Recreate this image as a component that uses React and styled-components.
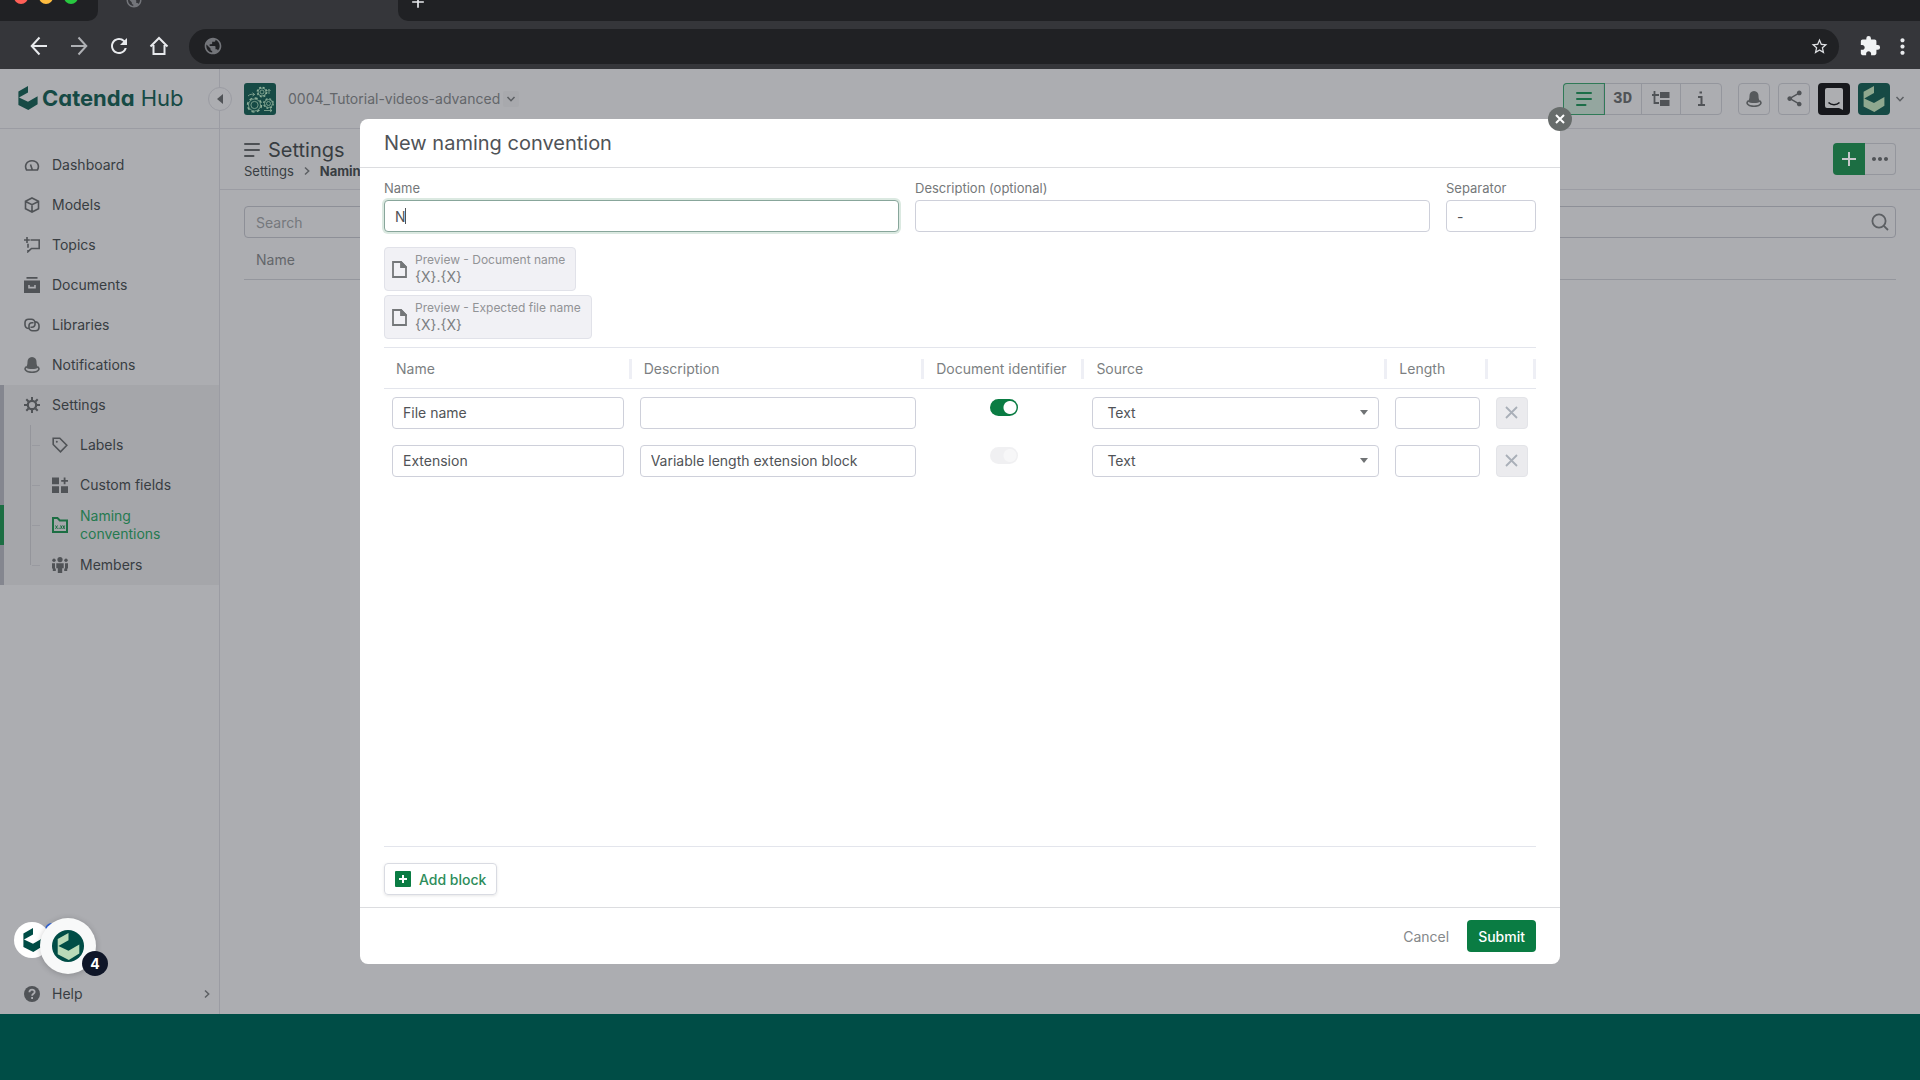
import { useState } from 'react'
import styled, { createGlobalStyle } from 'styled-components'
import { MdPublic, MdRefresh, MdStarBorder, MdExtension, MdMoreVert, MdAdd, MdShare, MdMoreHoriz } from 'react-icons/md'

const App = () => (
  <Screen>
    <GlobalStyle />
    <BrowserChrome />
    <Page>
      <Sidebar />
      <Main />
      <Overlay>
        <NamingDialog />
      </Overlay>
      <ChatBubbles />
    </Page>
    <BottomBand />
  </Screen>
)

export default App;

const BrowserChrome = () => (
  <header>
    <TabStrip>
      <WindowControls>
        <Light $color="#ff5f57" />
        <Light $color="#febc40" />
        <Light $color="#28c840" />
      </WindowControls>
      <Tab><MdPublic size={18} color="#73757a" /></Tab>
      <TabRest><MdAdd size={20} color="#e8eaed" /></TabRest>
    </TabStrip>
    <Toolbar>
      <ChromeButton aria-label="Back">
        <svg width="18" height="20" viewBox="0 0 18 20" fill="none" stroke="#e8eaed" strokeWidth="2"><path d="M17 10H2M9.500 1.500L1.700 10l7.800 8.500" /></svg>
      </ChromeButton>
      <ChromeButton aria-label="Forward">
        <svg width="18" height="20" viewBox="0 0 18 20" fill="none" stroke="#aeb0b4" strokeWidth="2"><path d="M1 10h15M8.500 1.500l7.800 8.500-7.800 8.500" /></svg>
      </ChromeButton>
      <ChromeButton aria-label="Reload"><MdRefresh size={24} color="#e8eaed" /></ChromeButton>
      <ChromeButton aria-label="Home">
        <svg width="20" height="20" viewBox="0 0 20 20" fill="none" stroke="#e8eaed" strokeWidth="2"><path d="M4.500 9v9h11V9M1.500 10.500L10 2l8.500 8.500" /></svg>
      </ChromeButton>
      <AddressBar>
        <MdPublic size={20} color="#73757a" />
        <AddressInput aria-label="Address" />
        <MdStarBorder size={19} color="#dddfe2" />
      </AddressBar>
      <ExtensionButton aria-label="Extensions"><MdExtension size={22} color="#f1f3f4" /></ExtensionButton>
      <ExtensionButton aria-label="More"><MdMoreVert size={25} color="#e8eaed" /></ExtensionButton>
    </Toolbar>
  </header>
)

/* icons */

const Hexagon = ({ size = 24, color = '#164a45' }) => (
  <svg width={size} height={size} viewBox="0 0 24 24" fill={color}>
    <path d="M12 0v6.400L3 11.500l9 4.200 9.600-5.500v8L12.300 24l-9.900-5.100V5.400z" />
  </svg>
)

const BellIcon = () => (
  <svg width="16" height="16" viewBox="0 0 16 16" fill="#56595c">
    <path d="M8 0C5 0 3.500 2.200 3.500 4.800c0 2.500-.4 4-1.700 5.600C4 12.600 12 12.600 14.200 10.400c-1.300-1.600-1.700-3.100-1.700-5.600C12.500 2.200 11 0 8 0z" />
    <path d="M2.500 9.500C-.5 12 1.500 15.300 8 15.300S16.500 12 13.500 9.500" fill="none" stroke="#56595c" strokeWidth="1.600" />
  </svg>
)

const icons = {
  Dashboard: <path d="M2.600 13C.2 9 2.300 3.700 8 3.700S15.800 9 13.400 13zM8.200 12.500L6.500 7.500" fill="none" />,
  Models: <path d="M8 1l6.500 3.300v7.400L8 15l-6.500-3.300V4.300zM1.500 4.500L8 7.700l6.500-3.200M8 7.700V15" fill="none" />,
  Topics: <path d="M6.500 3h8.700v8.500H7.500L4 14.700V13M4 6.700v4M0 3h5.800M3 0v6" fill="none" />,
  Documents: <path d="M2.500 0h11v1.800h-11zM0 3.600h16V16H0zM4.200 8v3.400h7.600V8h-1.600v1.800H5.800V8z" fillRule="evenodd" stroke="none" />,
  Libraries: <path d="M4.500 11.500A4.300 4.300 0 0 1 1 7V5.500a3.500 3.500 0 0 1 3.500-3.300h3A3.500 3.500 0 0 1 11 5.700v1.500a3 3 0 0 1-3 3H6.500M11.500 4.700A4.300 4.300 0 0 1 15 9v1.500a3.500 3.500 0 0 1-3.500 3.300h-3A3.500 3.500 0 0 1 5 10.300V8.800a3 3 0 0 1 3-3h1.500" fill="none" />,
  Settings: (
    <>
      <circle cx="8" cy="8" r="4.200" fill="none" strokeWidth="2.200" />
      <path d="M8 0v3M8 13v3M0 8h3M13 8h3M2.300 2.300l2.200 2.200M11.500 11.500l2.200 2.200M2.300 13.700l2.200-2.200M11.500 4.500l2.200-2.200" strokeWidth="2" />
    </>
  ),
  Labels: (
    <>
      <path d="M1.200 1.200h6.600l7 7-6.300 6.600-7.300-7.300z" fill="none" />
      <circle cx="4.800" cy="4.800" r="1" stroke="none" />
    </>
  ),
  'Custom fields': <path d="M0 .5h7v6.700H0zM0 9.200h7V16H0zM9 9.200h7V16H9zM11.700.5h1.800v2.400H16v1.800h-2.500v2.500h-1.800V4.700H9.200V2.900h2.500z" stroke="none" />,
  'Naming conventions': (
    <>
      <path d="M1 15V1h4.500l2.300 2.400H15V15z" fill="none" strokeWidth="2" />
      <path d="M3.500 8.500l2 3.300M5.500 8.500l-2 3.300M6.500 11.300h1.200M8.500 8.500l1.700 3.300M10.200 8.500l-1.700 3.300M11 8.500l1.700 3.300M12.700 8.500L11 11.800" strokeWidth="1" />
    </>
  ),
  Members: (
    <g stroke="none">
      <circle cx="8" cy="2.600" r="2.600" />
      <circle cx="2" cy="3.200" r="1.700" />
      <circle cx="14" cy="3.200" r="1.700" />
      <path d="M4.300 6.300h7.400v5h-1.500V16H5.800v-4.700H4.300zM0 6.300h3v5.200h.8V14H.8v-2.500H0zM16 6.300h-3v5.200h-.8V14h3v-2.500h.8z" />
    </g>
  ),
}

const NavIcon = ({ name }) => name === 'Notifications' ? <BellIcon /> : (
  <svg width="16" height="16" viewBox="0 0 16 16" fill="currentColor" stroke="currentColor" strokeWidth="1.600">{icons[name]}</svg>
)

const MenuIcon = ({ color = '#4d5054' }) => (
  <svg width="16" height="16" viewBox="0 0 16 16" stroke={color} strokeWidth="2" strokeLinecap="round"><path d="M1 2h14M1 8h14M1 14h8.500" /></svg>
)

const Chevron = ({ rotate = 0 }) => (
  <svg width="10" height="10" viewBox="0 0 10 10" fill="none" stroke="#5c5f63" strokeWidth="1.500"><path d="M1.500 3L5 6.700 8.500 3" transform={`rotate(${rotate} 5 5)`} /></svg>
)

const Gears = () => (
  <ProjectIcon width="32" height="32" viewBox="0 0 32 32" fill="none" stroke="#8fb09a" strokeWidth=".8">
    <circle cx="10.500" cy="22" r="7" strokeWidth="1.400" strokeDasharray="3 2.500" />
    <circle cx="10.500" cy="22" r="6" />
    <circle cx="10.500" cy="22" r="3.600" />
    <circle cx="18" cy="9" r="4.800" strokeWidth="1.200" strokeDasharray="2 1.800" />
    <circle cx="18" cy="9" r="4" />
    <circle cx="18" cy="9" r="2" />
    <circle cx="24.500" cy="20.500" r="4.800" strokeWidth="1.200" strokeDasharray="2 1.800" />
    <circle cx="24.500" cy="20.500" r="4" />
    <circle cx="24.500" cy="20.500" r="2" />
    <path d="M4 13c2-2 4-2 6.500-1.500M8.500 9.700l2.200 1.800-2.200 1.500M25 11V6.500M23.500 8L25 6.300 26.500 8M20 27.500h8M26 26l2 1.500-2 1.500" />
  </ProjectIcon>
)

/* page behind the dialog */

const mainItems = ['Dashboard', 'Models', 'Topics', 'Documents', 'Libraries', 'Notifications']
const settingsItems = ['Labels', 'Custom fields', 'Naming conventions', 'Members']

const Sidebar = () => (
  <SidebarContainer>
    <Brand href="#">
      <Hexagon />
      <BrandName><b>Catenda</b> Hub</BrandName>
    </Brand>
    <CollapseButton aria-label="Collapse sidebar">
      <svg width="8" height="10" viewBox="0 0 8 10" fill="#505357"><path d="M7 0v10L1 5z" /></svg>
    </CollapseButton>
    <Nav>
      {mainItems.map(item => <NavItem key={item} href="#"><NavIcon name={item} />{item}</NavItem>)}
      <SettingsGroup>
        <NavItem href="#"><NavIcon name="Settings" />Settings</NavItem>
        <SubList>
          {settingsItems.map(item => (
            <SubItem key={item} href="#" $active={item === 'Naming conventions'}>
              <NavIcon name={item} /><span>{item}</span>
            </SubItem>
          ))}
        </SubList>
      </SettingsGroup>
    </Nav>
    <HelpItem href="#">
      <svg width="16" height="16" viewBox="0 0 16 16"><circle cx="8" cy="8" r="8" fill="#505357" /><path d="M5.400 6.200c0-3.400 5.300-3.300 5.300-.2C10.700 7.700 8.100 7.900 8.100 9.700M8.100 11v1.900" fill="none" stroke="#acadb1" strokeWidth="1.800" /></svg>
      <span>Help</span>
      <Chevron rotate={-90} />
    </HelpItem>
  </SidebarContainer>
)

const Main = () => (
  <MainContainer>
    <TopBar>
      <Gears />
      <ProjectName>0004_Tutorial-videos-advanced</ProjectName>
      <ProjectToggle aria-label="Switch project"><Chevron /></ProjectToggle>
      <ViewButtons>
        <ViewButton $width={40} $active aria-label="List"><MenuIcon color="#1c6e48" /></ViewButton>
        <ViewButton $width={38}>3D</ViewButton>
        <ViewButton $width={39} aria-label="Tree">
          <svg width="18" height="16" viewBox="0 0 18 16" fill="#505357"><path d="M8 1h9.500v6H8zM8 9h9.500v6H8z" /><path d="M0 4h7M2.500 0v12H7" fill="none" stroke="#505357" strokeWidth="1.800" /></svg>
        </ViewButton>
        <ViewButton $width={40} aria-label="Info">
          <svg width="8" height="16" viewBox="0 0 8 16" fill="none" stroke="#505357" strokeWidth="2"><path d="M1 6h3.500v8M1 14h7M2.500 1.500h2.500" /></svg>
        </ViewButton>
      </ViewButtons>
      <IconButton aria-label="Notifications"><BellIcon /></IconButton>
      <IconButton aria-label="Share"><MdShare size={19} /></IconButton>
      <MessengerButton aria-label="Messages">
        <svg width="20" height="22" viewBox="0 0 20 22" fill="#adaeb1"><path d="M3 0h14a2 2 0 0 1 2 2v20l-4-2H3a2 2 0 0 1-2-2V2a2 2 0 0 1 2-2z" /><path d="M4.500 14.500c3 3 8 3 11 0" fill="none" stroke="#17181c" strokeWidth="1.500" /></svg>
      </MessengerButton>
      <Avatar aria-label="Account"><Hexagon size={26} color="#8fa88f" /></Avatar>
      <Chevron />
    </TopBar>
    <TitleBar>
      <div>
        <PageTitle><MenuIcon />Settings</PageTitle>
        <Breadcrumb><a href="#">Settings</a><Chevron rotate={-90} /><b>Naming conventions</b></Breadcrumb>
      </div>
      <SplitButton>
        <AddButton aria-label="Add"><MdAdd size={24} /></AddButton>
        <MoreButton aria-label="More actions"><MdMoreHoriz size={24} /></MoreButton>
      </SplitButton>
    </TitleBar>
    <ListArea>
      <SearchBox>
        <SearchInput type="search" placeholder="Search" aria-label="Search" />
        <svg width="18" height="18" viewBox="0 0 18 18" fill="none" stroke="#5c5f63" strokeWidth="1.800"><circle cx="8" cy="8" r="6.600" /><path d="M12.800 12.800L17 17" /></svg>
      </SearchBox>
      <ListHeader>Name</ListHeader>
    </ListArea>
  </MainContainer>
)

const ChatBubbles = () => (
  <>
    <NoticeDot />
    <SmallBubble aria-label="Catenda messages"><Hexagon size={24} color="#004d46" /></SmallBubble>
    <LargeBubble aria-label="Open chat"><span><Hexagon size={27} color="#b9dbb8" /></span></LargeBubble>
    <UnreadBadge>4</UnreadBadge>
  </>
)

/* dialog */

const blocks = [
  { name: 'File name', description: '', identifier: true },
  { name: 'Extension', description: 'Variable length extension block', identifier: false },
]

const FileIcon = () => (
  <svg width="15" height="17" viewBox="0 0 15 17" fill="none" stroke="#747779" strokeWidth="1.800"><path d="M1 1h8l5 5v10H1z" /><path d="M9 1v5h5z" fill="#747779" /></svg>
)

const Preview = ({ title }) => (
  <PreviewCard>
    <FileIcon />
    <div>
      <PreviewTitle>{title}</PreviewTitle>
      <PreviewValue>{'{X}.{X}'}</PreviewValue>
    </div>
  </PreviewCard>
)

const NamingDialog = () => {
  const [name, setName] = useState('N')

  return (
    <Dialog role="dialog" aria-labelledby="dialog-title">
      <CloseButton aria-label="Close">
        <svg width="10" height="10" viewBox="0 0 10 10" stroke="#fff" strokeWidth="2"><path d="M1 1l8 8M9 1L1 9" /></svg>
      </CloseButton>
      <DialogTitle id="dialog-title">New naming convention</DialogTitle>
      <DialogBody>
        <Fields>
          <Field>Name<FocusedInput $caret={name === 'N'} value={name} onChange={e => setName(e.target.value)} /></Field>
          <Field>Description (optional)<Input /></Field>
          <Field>Separator<Input defaultValue="-" /></Field>
        </Fields>
        <Previews>
          <Preview title="Preview - Document name" />
          <Preview title="Preview - Expected file name" />
        </Previews>
        <BlockArea>
          <BlockTable>
            <colgroup>
              <Col $width="21.5%" /><Col $width="25.4%" /><Col $width="13.9%" /><Col $width="26.3%" /><Col $width="8.7%" /><Col $width="4.2%" />
            </colgroup>
            <thead>
              <tr>
                {['Name', 'Description', 'Document identifier', 'Source', 'Length', ''].map(head => (
                  <HeadCell key={head}><HeadLabel>{head}</HeadLabel></HeadCell>
                ))}
              </tr>
            </thead>
            <tbody>
              {blocks.map(block => (
                <tr key={block.name}>
                  <Cell><Input aria-label="Block name" defaultValue={block.name} /></Cell>
                  <Cell><Input aria-label="Block description" defaultValue={block.description} /></Cell>
                  <ToggleCell><Toggle type="checkbox" aria-label="Document identifier" defaultChecked={block.identifier} disabled={!block.identifier} /></ToggleCell>
                  <Cell><Select aria-label="Source"><option>Text</option></Select></Cell>
                  <Cell><Input aria-label="Length" /></Cell>
                  <Cell>
                    <RemoveButton aria-label="Remove block" disabled>
                      <svg width="13" height="13" viewBox="0 0 13 13" stroke="#a9afb8" strokeWidth="1.800"><path d="M1 1l11 11M12 1L1 12" /></svg>
                    </RemoveButton>
                  </Cell>
                </tr>
              ))}
            </tbody>
          </BlockTable>
        </BlockArea>
        <AddBlockButton>
          <svg width="16" height="16" viewBox="0 0 16 16"><rect width="16" height="16" rx="1" fill="#0a7c43" /><path d="M8 4v8M4 8h8" stroke="#fff" strokeWidth="2" /></svg>
          Add block
        </AddBlockButton>
      </DialogBody>
      <DialogFooter>
        <CancelButton>Cancel</CancelButton>
        <SubmitButton>Submit</SubmitButton>
      </DialogFooter>
    </Dialog>
  )
}

const GlobalStyle = createGlobalStyle`
  * {
    box-sizing: border-box;
  }

  body {
    margin: 0;
    font-family: Inter, "Liberation Sans", sans-serif;
    font-size: 14px;
    color: #383d42;
  }

  button, input, select {
    font: inherit;
    color: inherit;
  }

  button {
    display: flex;
    align-items: center;
    justify-content: center;
    padding: 0;
    border: 0;
    background: none;
  }

  a {
    color: inherit;
    text-decoration: none;
  }

  svg {
    flex: none;
  }
`

const Screen = styled.div`
  display: flex;
  flex-direction: column;
  height: 100vh;
`

const TabStrip = styled.div`
  display: flex;
  align-items: flex-end;
  height: 21px;
  overflow: hidden;
  background-color: #35363a;
`

const WindowControls = styled.div`
  display: flex;
  align-items: center;
  gap: 11px;
  width: 98px;
  height: 42px;
  padding: 0 0 6px 14px;
  border-bottom-right-radius: 10px;
  background-color: #202124;
`

const Light = styled.i`
  width: 14px;
  height: 14px;
  border-radius: 50%;
  background-color: ${props => props.$color};
`

const Tab = styled.div`
  display: flex;
  align-items: center;
  width: 300px;
  height: 42px;
  padding-left: 27px;
`

const TabRest = styled.div`
  display: flex;
  flex: 1;
  align-items: center;
  height: 42px;
  padding: 4px 0 0 10px;
  border-bottom-left-radius: 10px;
  background-color: #202124;
`

const Toolbar = styled.div`
  display: flex;
  align-items: center;
  height: 48px;
  padding: 2px 2px 0 19px;
  background-color: #35363a;
`

const ChromeButton = styled.button`
  width: 40px;
  height: 40px;
`

const AddressBar = styled.div`
  display: flex;
  flex: 1;
  align-items: center;
  height: 35px;
  margin: 0 15px 0 10px;
  padding: 0 10px 0 14px;
  border-radius: 18px;
  background-color: #202124;
`

const AddressInput = styled.input`
  flex: 1;
  border: 0;
  background: none;
  color: #e8eaed;
`

const ExtensionButton = styled.button`
  width: 32px;
`

const Page = styled.div`
  position: relative;
  display: flex;
  flex: 1;
  min-height: 0;
  background-color: #acadb1;
`

const BottomBand = styled.footer`
  height: 66px;
  background-color: #004d46;
`

const SidebarContainer = styled.aside`
  position: relative;
  display: flex;
  flex-direction: column;
  width: 220px;
  border-right: 1px solid #9b9ca3;
`

const Brand = styled.a`
  display: flex;
  align-items: center;
  gap: 2px;
  height: 60px;
  padding: 0 0 2px 16px;
  border-bottom: 1px solid #9b9ca3;
  color: #164a45;
`

const BrandName = styled.span`
  font-size: 22px;
  font-feature-settings: "cv11";
`

const CollapseButton = styled.button`
  position: absolute;
  top: 18px;
  right: -13px;
  width: 24px;
  height: 24px;
  border: 1px solid #9b9ca3;
  border-radius: 50%;
  background-color: #acadb1;
`

const Nav = styled.nav`
  flex: 1;
  padding-top: 16px;
`

const NavItem = styled.a`
  display: flex;
  align-items: center;
  gap: 12px;
  height: 40px;
  padding-left: 24px;
  line-height: 18px;

  svg {
    color: #505357;
  }
`

const HelpItem = styled(NavItem)`
  padding-right: 7px;

  span {
    flex: 1;
  }
`

const SettingsGroup = styled.div`
  background: linear-gradient(#84868f, #84868f) 0 0 / 4px 100% no-repeat #a5a6aa;
`

const SubList = styled.div`
  background: linear-gradient(#94959b, #94959b) 30px 0 / 1px 140px no-repeat;
`

const SubItem = styled(NavItem)`
  padding-left: 52px;
  color: ${props => props.$active ? '#257a50' : 'inherit'};
  background:
    linear-gradient(#999aa0, #999aa0) 32px 50% / 8px 1px no-repeat,
    linear-gradient(#1c6e43, #1c6e43) 0 0 / ${props => props.$active ? 4 : 0}px 100% no-repeat;

  svg {
    color: ${props => props.$active ? '#1c6e43' : '#505357'};
  }

  span {
    width: 100px;
  }
`

const MainContainer = styled.main`
  flex: 1;
  min-width: 0;
`

const TopBar = styled.div`
  display: flex;
  align-items: center;
  height: 60px;
  padding: 0 15px 0 24px;
  border-bottom: 1px solid #9b9ca3;
`

const ProjectIcon = styled.svg`
  border-radius: 3px;
  background-color: #164a45;
`

const ProjectName = styled.span`
  margin-left: 12px;
  line-height: 18px;
  color: #63666a;
`

const ProjectToggle = styled.button`
  width: 16px;
  height: 16px;
  margin-left: 3px;
  border-radius: 2px;
  background-color: #a8a9ad;
`

const ViewButtons = styled.div`
  display: flex;
  height: 32px;
  margin: 0 16px 0 auto;
  border: 1px solid #94969d;
  border-radius: 4px;
`

const ViewButton = styled.button`
  width: ${props => props.$width}px;
  border-right: 1px solid #94969d;
  font-family: "Liberation Mono", monospace;
  font-size: 16px;
  font-weight: bold;
  line-height: 20px;
  color: #505357;
  background-color: ${props => props.$active ? '#94a69f' : 'transparent'};
  box-shadow: ${props => props.$active ? '0 0 0 1px #2f7a57' : 'none'};

  &:first-child {
    border-radius: 3px 0 0 3px;
  }

  &:last-child {
    border-right: 0;
  }
`

const IconButton = styled.button`
  width: 32px;
  height: 32px;
  margin-right: 8px;
  border: 1px solid #94969d;
  border-radius: 4px;
  color: #505357;
`

const MessengerButton = styled(IconButton)`
  border: 0;
  background-color: #17181c;
`

const Avatar = styled(IconButton)`
  margin-right: 5px;
  border: 0;
  background-color: #164a45;
`

const TitleBar = styled.div`
  display: flex;
  justify-content: space-between;
  align-items: center;
  height: 61px;
  padding: 0 24px;
  border-bottom: 1px solid #9b9ca3;
`

const PageTitle = styled.h1`
  display: flex;
  align-items: center;
  gap: 8px;
  margin: 0;
  font-size: 20px;
  font-weight: 400;
  line-height: 24px;
`

const Breadcrumb = styled.div`
  display: flex;
  align-items: center;
  gap: 8px;
  font-size: 13px;
  line-height: 18px;
`

const SplitButton = styled.div`
  display: flex;
  height: 32px;
`

const AddButton = styled.button`
  width: 32px;
  border-radius: 4px 0 0 4px;
  color: #c6c7ca;
  background-color: #1c6e43;
`

const MoreButton = styled.button`
  width: 31px;
  border: 1px solid #94969d;
  border-left: 0;
  border-radius: 0 4px 4px 0;
  color: #505357;
`

const ListArea = styled.div`
  padding: 16px 24px;
`

const SearchBox = styled.div`
  display: flex;
  align-items: center;
  height: 32px;
  padding: 0 6px 0 11px;
  border: 1px solid #8d8f97;
  border-radius: 4px;
`

const SearchInput = styled.input`
  flex: 1;
  padding: 0;
  border: 0;
  background: none;

  &::placeholder {
    color: #75787d;
  }
`

const ListHeader = styled.div`
  height: 42px;
  padding-left: 12px;
  border-bottom: 1px solid #94969d;
  line-height: 44px;
  color: #63666a;
`

const Overlay = styled.div`
  position: absolute;
  inset: 0;
  display: flex;
  justify-content: center;
  padding: 50px;
`

const Dialog = styled.section`
  position: relative;
  display: flex;
  flex-direction: column;
  width: 1200px;
  border-radius: 8px;
  background-color: #fff;
  color: #505357;
`

const CloseButton = styled.button`
  position: absolute;
  top: -12px;
  right: -12px;
  width: 24px;
  height: 24px;
  border-radius: 50%;
  background-color: #676c6b;
`

const DialogTitle = styled.h2`
  height: 49px;
  margin: 0;
  padding: 0 24px;
  border-bottom: 1px solid #dcdde0;
  font-size: 20px;
  font-weight: 400;
  line-height: 48px;
`

const DialogBody = styled.div`
  display: flex;
  flex: 1;
  flex-direction: column;
  align-items: flex-start;
  padding: 12px 24px;
`

const Fields = styled.div`
  display: grid;
  grid-template-columns: 1fr 1fr 90px;
  gap: 16px;
  width: 100%;
`

const Field = styled.label`
  display: grid;
  gap: 4px;
  font-size: 13px;
  line-height: 16px;
  color: #75787a;
`

const Input = styled.input`
  display: block;
  width: 100%;
  height: 32px;
  padding: 0 10px;
  border: 1px solid #ced0da;
  border-radius: 4px;
  outline: 0;
  background-color: #fff;
  font-size: 14px;
  color: #505357;
`

const FocusedInput = styled(Input)`
  border-color: #88a69b;
  box-shadow: 0 0 0 2px #dbe9e1;
  background: linear-gradient(#505357, #505357) 20px 7px / ${props => props.$caret ? 1 : 0}px 16px no-repeat #fff;
`

const Previews = styled.div`
  display: flex;
  flex-direction: column;
  align-items: flex-start;
  gap: 4px;
  margin: 15px 0 8px;
`

const PreviewCard = styled.div`
  display: flex;
  align-items: center;
  gap: 8px;
  height: 44px;
  padding: 0 10px 0 7px;
  border: 1px solid #e1e2e9;
  border-radius: 4px;
  background-color: #f1f1f5;
`

const PreviewTitle = styled.div`
  font-size: 12px;
  line-height: 16px;
  color: #919396;
`

const PreviewValue = styled.div`
  line-height: 18px;
  color: #7c7f82;
`

const BlockArea = styled.div`
  flex: 1;
  width: 100%;
  margin-bottom: 16px;
  border: solid #e3e5ec;
  border-width: 1px 0;
`

const BlockTable = styled.table`
  width: 100%;
  table-layout: fixed;
  border-collapse: collapse;
`

const Col = styled.col`
  width: ${props => props.$width};
`

const HeadCell = styled.th`
  height: 40px;
  padding: 2px 0 0;
  border-bottom: 1px solid #e3e5ec;
  font-weight: 400;
  text-align: left;
  color: #7c7f82;
`

const HeadLabel = styled.div`
  height: 20px;
  padding-left: 12px;
  border-right: 3px solid #eeeff5;
  line-height: 20px;
  white-space: nowrap;
`

const Cell = styled.td`
  height: 48px;
  padding: 8px;
`

const ToggleCell = styled(Cell)`
  padding: 10px 0;
  text-align: center;
  vertical-align: top;
`

const Toggle = styled.input`
  width: 28px;
  height: 17px;
  margin: 0;
  border-radius: 9px;
  appearance: none;
  background: radial-gradient(circle at 20px 50%, #fff 6px, #0a7c43 7px);

  &:disabled {
    background: radial-gradient(circle at 20px 50%, #f7f7f8 6px, #f0f0f2 7px);
  }
`

const Select = styled.select`
  display: block;
  width: 100%;
  height: 32px;
  padding: 0 14px;
  border: 1px solid #ced0da;
  border-radius: 4px;
  appearance: none;
  background: url("data:image/svg+xml,%3Csvg xmlns='http://www.w3.org/2000/svg' width='8' height='5'%3E%3Cpath d='M0 0h8L4 5z' fill='%23707375'/%3E%3C/svg%3E") right 10px center no-repeat #fff;
`

const RemoveButton = styled.button`
  width: 32px;
  height: 32px;
  border: 1px solid #e3e4e8;
  border-radius: 4px;
  background-color: #ebebee;
`

const AddBlockButton = styled.button`
  gap: 8px;
  height: 32px;
  padding: 0 10px;
  border: 1px solid #d9dbe2;
  border-radius: 4px;
  box-shadow: 0 1px 3px #0000001a;
  font-weight: 500;
  color: #2e8d5b;
`

const DialogFooter = styled.div`
  display: flex;
  justify-content: flex-end;
  align-items: center;
  gap: 8px;
  height: 57px;
  padding: 0 24px;
  border-top: 1px solid #dcdde0;
`

const CancelButton = styled.button`
  height: 32px;
  padding: 0 10px;
  color: #85888a;
`

const SubmitButton = styled.button`
  height: 32px;
  padding: 0 11px;
  border-radius: 4px;
  background-color: #0a7c43;
  font-weight: 500;
  color: #fff;
`

const NoticeDot = styled.i`
  position: absolute;
  bottom: 78px;
  left: 45px;
  width: 13px;
  height: 13px;
  border-radius: 50%;
  background-color: #2f63d6;
`

const SmallBubble = styled.button`
  position: absolute;
  bottom: 56px;
  left: 14px;
  width: 36px;
  height: 36px;
  padding-left: 2px;
  border-radius: 50%;
  background-color: #fff;
`

const LargeBubble = styled.button`
  position: absolute;
  bottom: 40px;
  left: 40px;
  width: 56px;
  height: 56px;
  border-radius: 50%;
  box-shadow: 0 1px 6px #0003;
  background-color: #f8f9f9;

  span {
    display: grid;
    place-content: center;
    width: 32px;
    height: 32px;
    border-radius: 50%;
    background-color: #004d46;
  }
`

const UnreadBadge = styled.span`
  position: absolute;
  bottom: 38px;
  left: 82px;
  width: 26px;
  height: 25px;
  border-radius: 50%;
  background-color: #0f1628;
  font-weight: 700;
  line-height: 25px;
  text-align: center;
  color: #fff;
`
